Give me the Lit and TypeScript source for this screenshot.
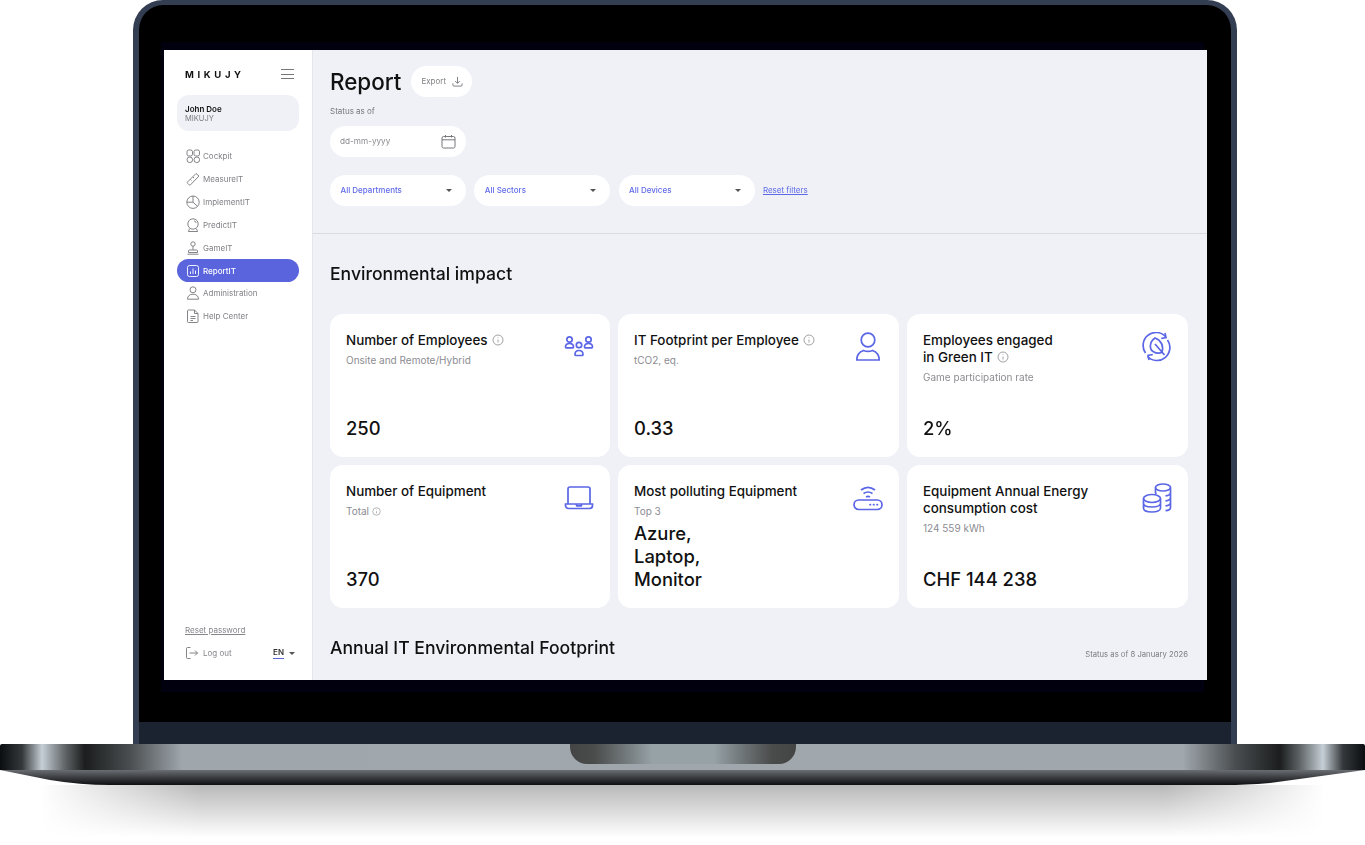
import { LitElement, html, svg, css } from 'lit';
import { customElement } from 'lit/decorators.js';

const navIcons: Record<string, unknown> = {
  cockpit: svg`<rect x="1" y="1" width="5.500" height="6" rx="1.800"/><rect x="8" y="1" width="5.500" height="6" rx="1.800"/><circle cx="3.800" cy="10.800" r="2.800"/><circle cx="10.800" cy="10.800" r="2.800"/>`,
  measure: svg`<path d="M1.500 10 10 1.500 13 4 4.500 12.800a1 1 0 0 1-1.400 0L1.500 11.200a.9.9 0 0 1 0-1.200Z"/><path d="m4.500 7.500 1 1M7 5l1 1"/>`,
  implement: svg`<circle cx="7" cy="7.200" r="6.200"/><path d="M7 1v6.200l4.600 4.200M7 7.200H.9"/>`,
  predict: svg`<circle cx="7" cy="6" r="5.200"/><path d="M8 2.800a3 3 0 0 1 2.200 2.200M3.600 10.600 2.400 13.500h9.200l-1.200-2.900"/>`,
  game: svg`<circle cx="7" cy="3" r="2.200"/><path d="M7 5.200V9M3.500 9h7a1 1 0 0 1 1 1v1.500h-9V10a1 1 0 0 1 1-1ZM1.500 13.200h11"/>`,
  report: svg`<rect x="1.500" y="1.500" width="11" height="11" rx="2"/><path d="M4.500 10V7.500M7 10V4.500M9.500 10V6.500"/>`,
  admin: svg`<circle cx="7" cy="3.800" r="3"/><path d="M1.500 13.200c0-3 2-5 5.500-5s5.500 2 5.500 5Z"/>`,
  help: svg`<path d="M2.500 1h6l3.500 3.500v8a1 1 0 0 1-1 1h-8.500a1 1 0 0 1-1-1V2a1 1 0 0 1 1-1Z"/><path d="M8.500 1v3.500H12M4.500 7.500h5M4.500 9.500h5M4.500 11.500h2.500"/>`,
};

// all drawn on a 30x30 box, top right of the card
const cardIcons: Record<string, unknown> = {
  people: svg`<circle cx="5.500" cy="7.500" r="2.700"/><path d="M1.500 15c0-2.500 1.500-3.500 4-3.500s4 1 4 3.500a.8.8 0 0 1-.8.800H2.300a.8.8 0 0 1-.8-.8Z"/><circle cx="15" cy="13" r="2.700"/><path d="M11 22.500c0-2.500 1.500-4 4-4s4 1.500 4 4a1 1 0 0 1-1 1h-6a1 1 0 0 1-1-1Z"/><circle cx="24.500" cy="7.500" r="2.700"/><path d="M20.500 15c0-2.500 1.500-3.500 4-3.500s4 1 4 3.500a.8.8 0 0 1-.8.800h-6.400a.8.8 0 0 1-.8-.8Z"/>`,
  person: svg`<circle cx="15" cy="8" r="6.800"/><path d="M3.800 28c0-5 2.500-8 6.700-9.500 2.500 1 6.500 1 9 0 4.200 1.500 6.700 4.500 6.700 9.500Z"/>`,
  leaf: svg`<path d="M3.500 21A13 13 0 0 1 23.500 4.500M25.500 8A13 13 0 0 1 5.500 24.500"/><path d="m23 1 1 4.500-4.800 1M7 28l-1-4.500 4.800-1"/><path d="M13 6C7 10 7 18 12 20c3 2 7 1 8 0 2-6-1-12-7-14ZM13 12l9.500 11"/>`,
  laptop: svg`<path d="M4 21V6a2 2 0 0 1 2-2h18a2 2 0 0 1 2 2v15"/><path d="M1.500 21h27v1.500a3 3 0 0 1-3 3h-21a3 3 0 0 1-3-3ZM12 21l.8 1.800h4.400L18 21"/>`,
  router: svg`<rect x="1" y="17" width="28" height="9.500" rx="4.700"/><path d="M8 7c4.500-3.500 9.500-3.500 14 0M10.500 10.500c3-2 6-2 9 0M13 14c1.500-.8 2.500-.8 4 0"/><path d="M17 21.700h.5M20.500 21.700h.5M24 21.700h.5" stroke-linecap="round"/>`,
  coins: svg`<ellipse cx="21" cy="4.500" rx="7.500" ry="3.500"/><path d="M13.500 4.500v5c0 .6.300 1.100.8 1.600M28.500 4.500v20c0 1.500-2 3-5 3.200M28.500 9.500c0 1.500-2 3-5 3.400M28.500 14.500c0 1.500-2 3-5 3.400M28.500 19.500c0 1.500-2 3-5 3.400"/><ellipse cx="10" cy="15.500" rx="8.500" ry="4"/><path d="M1.500 15.500V25c0 2.500 3.800 4 8.500 4s8.500-1.500 8.500-4v-9.500M1.500 20.200c0 2.300 3.800 3.800 8.500 3.800s8.500-1.500 8.500-3.800"/>`,
};

const nav = [
  ['Cockpit', 'cockpit'],
  ['MeasureIT', 'measure'],
  ['ImplementIT', 'implement'],
  ['PredictIT', 'predict'],
  ['GameIT', 'game'],
  ['ReportIT', 'report'],
  ['Administration', 'admin'],
  ['Help Center', 'help'],
];

const info = html`<svg class="info" viewBox="0 0 12 12"><circle cx="6" cy="6" r="5"/><path d="M6 5.500v3M6 3.400v.6"/></svg>`;

const cards = [
  { title: ['Number of Employees'], sub: 'Onsite and Remote/Hybrid', value: ['250'], icon: 'people', info: true },
  { title: ['IT Footprint per Employee'], sub: 'tCO2, eq.', value: ['0.33'], icon: 'person', info: true },
  { title: ['Employees engaged', 'in Green IT'], sub: 'Game participation rate', value: ['2%'], icon: 'leaf', info: true },
  { title: ['Number of Equipment'], sub: 'Total', value: ['370'], icon: 'laptop', subInfo: true },
  { title: ['Most polluting Equipment'], sub: 'Top 3', value: ['Azure,', 'Laptop,', 'Monitor'], icon: 'router' },
  { title: ['Equipment Annual Energy', 'consumption cost'], sub: '124 559 kWh', value: ['CHF 144 238'], icon: 'coins' },
];

@customElement('app-root')
export class AppRoot extends LitElement {
  static styles = css`
    :host {
      display: block;
      width: 1365px;
      height: 845px;
      overflow: hidden;
      background: #fff;
      font-family: Inter, 'Liberation Sans', sans-serif;
      color: #111;
    }
    .lid {
      width: 1104px;
      height: 744px;
      box-sizing: border-box;
      margin-left: 133px;
      border: 6px solid #343e52;
      border-top-width: 5px;
      border-bottom: none;
      border-radius: 30px 30px 0 0;
      background: #000;
      display: flex;
      flex-direction: column;
      overflow: hidden;
    }
    .bezel {
      flex: 1;
      padding: 45px 24px 42px 25px;
    }
    .chin {
      height: 22px;
      background: #1b2230;
    }
    .screen {
      height: 630px;
      display: flex;
      background: #eff1f6;
      overflow: hidden;
      box-shadow: -3px 12px 0 #00000f, -3px -8px 0 #00000f;
    }
    .sidebar {
      width: 149px;
      flex: none;
      box-sizing: border-box;
      padding: 17px 13px 20px;
      background: #fff;
      border-right: 1px solid #e4e6ec;
      display: flex;
      flex-direction: column;
      filter: blur(0.3px);
    }
    .brand {
      display: flex;
      align-items: center;
      justify-content: space-between;
      height: 14px;
      padding: 0 5px 0 8px;
    }
    .logo {
      font-size: 9.500px;
      font-weight: 700;
      letter-spacing: 3.650px;
    }
    .burger {
      width: 13px;
      height: 10px;
      border-top: 1px solid #777;
      border-bottom: 1px solid #777;
      position: relative;
      box-sizing: border-box;
    }
    .burger::after {
      content: '';
      position: absolute;
      left: 0;
      right: 0;
      top: 3.500px;
      height: 1px;
      background: #777;
    }
    .user {
      margin-top: 14px;
      height: 36px;
      box-sizing: border-box;
      padding: 9.500px 8px;
      border-radius: 12px;
      background: #eff1f6;
      font-size: 8px;
      line-height: 9.500px;
    }
    .user b {
      display: block;
      font-weight: 600;
    }
    .user span {
      color: #7c7c82;
      font-size: 7.500px;
    }
    .nav {
      margin-top: 14px;
      display: flex;
      flex-direction: column;
    }
    .item {
      height: 22.850px;
      display: flex;
      align-items: center;
      gap: 3px;
      padding-left: 9px;
      border-radius: 12px;
      font-size: 8px;
      color: #818186;
    }
    .item svg {
      width: 14px;
      height: 14px;
      fill: none;
      stroke: #77777c;
      stroke-width: 0.9;
    }
    .item.active {
      background: #5a64dd;
      color: #fff;
      font-weight: 500;
    }
    .item.active svg {
      stroke: #fff;
    }
    .bottom {
      margin-top: auto;
      padding-left: 8px;
      font-size: 8px;
      color: #85858a;
    }
    .reset-pw {
      line-height: 12px;
      text-decoration: underline;
      margin-bottom: 10px;
    }
    .logout {
      display: flex;
      align-items: center;
      height: 14px;
    }
    .logout svg {
      width: 14px;
      height: 14px;
      fill: none;
      stroke: #77777c;
      stroke-width: 0.9;
      margin-right: 4px;
    }
    .lang {
      margin-left: auto;
      margin-right: 4px;
      display: flex;
      align-items: center;
      gap: 5px;
      color: #333;
      font-weight: 600;
    }
    .lang span {
      border-bottom: 1px solid #5a64dd;
      padding-bottom: 1px;
    }
    .caret {
      width: 0;
      height: 0;
      border-left: 3px solid transparent;
      border-right: 3px solid transparent;
      border-top: 3.500px solid #555;
    }
    .main {
      flex: 1;
      min-width: 0;
      filter: blur(0.25px);
    }
    .head {
      height: 184px;
      box-sizing: border-box;
      padding: 16px 17px 0;
      border-bottom: 1px solid #d9dbe1;
    }
    .title-row {
      display: flex;
      align-items: center;
      gap: 10px;
      height: 31px;
    }
    h1 {
      margin: 0;
      font-size: 22.400px;
      font-weight: 500;
    }
    .pill {
      background: #fff;
      border-radius: 15.500px;
      height: 31px;
      box-sizing: border-box;
      padding-bottom: 1px;
      display: flex;
      align-items: center;
    }
    .export {
      width: 61px;
      padding-left: 10px;
      gap: 6px;
      font-size: 8px;
      color: #808085;
    }
    .export svg,
    .date svg {
      fill: none;
      stroke: #77777c;
      stroke-width: 1;
    }
    .export svg {
      width: 11px;
      height: 11px;
    }
    .status-label {
      margin: 9px 0 10px;
      font-size: 8px;
      line-height: 10px;
      color: #77777c;
    }
    .date {
      width: 136px;
      padding-left: 10px;
      padding-right: 10px;
      justify-content: space-between;
      font-size: 8.200px;
      color: #8a8a8f;
    }
    .date svg {
      width: 15px;
      height: 15px;
    }
    .filters {
      margin-top: 18px;
      display: flex;
      align-items: center;
      gap: 8.300px;
    }
    .select {
      width: 136px;
      padding-left: 10.500px;
      padding-right: 14px;
      justify-content: space-between;
      font-size: 8px;
      font-weight: 500;
      color: #5f6ae8;
    }
    .reset {
      font-size: 8px;
      color: #5f6ae8;
      text-decoration: underline;
      margin-bottom: 1px;
    }
    .content {
      padding: 29px 19px 0 17px;
    }
    h2 {
      margin: 0;
      font-size: 17.600px;
      line-height: 22px;
      font-weight: 500;
    }
    .grid {
      margin-top: 29px;
      display: grid;
      grid-template-columns: 280px 281px 281px;
      grid-auto-rows: 143px;
      gap: 8px;
    }
    .card {
      background: #fff;
      border-radius: 13px;
      padding: 18px 16px 17px;
      display: flex;
      flex-direction: column;
      position: relative;
    }
    .card-icon {
      position: absolute;
      top: 18px;
      right: 16px;
      width: 30px;
      height: 30px;
      fill: none;
      stroke: #5a66e6;
      stroke-width: 1.700;
    }
    .card-title {
      font-size: 13.400px;
      line-height: 17px;
      font-weight: 500;
    }
    .card-title div {
      white-space: nowrap;
    }
    .info {
      width: 12px;
      height: 12px;
      fill: none;
      stroke: #8a8a8f;
      stroke-width: 0.8;
      vertical-align: -1px;
      margin-left: 4px;
    }
    .card-sub {
      margin-top: 5px;
      font-size: 10px;
      line-height: 12px;
      color: #8c8c92;
    }
    .card-sub .info {
      width: 9px;
      height: 9px;
      vertical-align: -0.500px;
      margin-left: 3px;
    }
    .card-value {
      margin-top: auto;
      font-size: 18.400px;
      line-height: 23px;
      font-weight: 500;
    }
    .foot {
      margin-top: 29px;
      display: flex;
      justify-content: space-between;
      align-items: flex-start;
    }
    .foot span {
      margin-top: 13px;
      font-size: 7.700px;
      line-height: 10px;
      color: #7c7c82;
    }
    .base {
      position: relative;
      height: 41px;
    }
    .deck {
      height: 26px;
      border-radius: 2px 2px 0 0;
      background: linear-gradient(90deg, #0b0e10 0, #34383a 22px, #c6cfd6 42px, #5c6163 66px, #1b1d1e 85px, #4a4e50 130px, #9fa6ac 182px, #a0a7ad 1183px, #4a4e50 1235px, #1b1d1e 1280px, #5c6163 1299px, #c6cfd6 1323px, #34383a 1343px, #0b0e10 1365px);
    }
    .lip {
      height: 15px;
      background: linear-gradient(180deg, #6a6e72 0, #3a3c40 50%, #0e0f11 100%);
      clip-path: path('M0 0H1365L1270 13Q1245 15 1225 15H110Q80 15 50 10Z');
    }
    .notch {
      position: absolute;
      left: 570px;
      top: 0;
      width: 226px;
      height: 20px;
      border-radius: 0 0 17px 17px;
      background: linear-gradient(90deg, #444 0, #4a4b4b 24px, #7a8285 62px, #97a2a6 82px, #97a2a6 144px, #7a8285 164px, #4a4b4b 202px, #444 226px);
    }
    .shadow {
      height: 55px;
      margin: 0 40px;
      background: linear-gradient(180deg, #b8b8b8 0, #d6d6d6 40%, #fff 95%);
      -webkit-mask-image: linear-gradient(90deg, transparent 0, #000 160px, #000 calc(100% - 160px), transparent 100%);
      mask-image: linear-gradient(90deg, transparent 0, #000 160px, #000 calc(100% - 160px), transparent 100%);
    }
  `;

  render() {
    return html`
      <div class="lid">
        <div class="bezel">
          <div class="screen">
            <aside class="sidebar">
              <div class="brand">
                <span class="logo">MIKUJY</span>
                <div class="burger"></div>
              </div>
              <div class="user"><b>John Doe</b><span>MIKUJY</span></div>
              <nav class="nav">
                ${nav.map(([label, key]) => html`
                  <div class="item ${key === 'report' ? 'active' : ''}">
                    <svg viewBox="0 0 14 14">${navIcons[key]}</svg>${label}
                  </div>`)}
              </nav>
              <div class="bottom">
                <div class="reset-pw">Reset password</div>
                <div class="logout">
                  <svg viewBox="0 0 14 14"><path d="M5.500 1.500H2.500a1 1 0 0 0-1 1v9a1 1 0 0 0 1 1h3M4.500 7h8M10 4.500 12.500 7 10 9.500"/></svg>
                  Log out
                  <div class="lang"><span>EN</span><i class="caret"></i></div>
                </div>
              </div>
            </aside>
            <main class="main">
              <section class="head">
                <div class="title-row">
                  <h1>Report</h1>
                  <div class="pill export">Export
                    <svg viewBox="0 0 12 12"><path d="M6 1v7M3.500 5.500 6 8l2.500-2.500M1 8v2a1 1 0 0 0 1 1h8a1 1 0 0 0 1-1V8"/></svg>
                  </div>
                </div>
                <div class="status-label">Status as of</div>
                <div class="pill date">dd-mm-yyyy
                  <svg viewBox="0 0 15 15"><rect x="1" y="2.500" width="13" height="11.500" rx="1.500"/><path d="M1 5.800h13M4.500 1v2.500M10.500 1v2.500"/></svg>
                </div>
                <div class="filters">
                  ${['All Departments', 'All Sectors', 'All Devices'].map(
                    (f) => html`<div class="pill select">${f}<i class="caret"></i></div>`,
                  )}
                  <a class="reset">Reset filters</a>
                </div>
              </section>
              <section class="content">
                <h2>Environmental impact</h2>
                <div class="grid">
                  ${cards.map((c) => html`
                    <div class="card">
                      <svg class="card-icon" viewBox="0 0 30 30">${cardIcons[c.icon]}</svg>
                      <div class="card-title">
                        ${c.title.map((t, i) => html`<div>${t}${c.info && i === c.title.length - 1 ? info : ''}</div>`)}
                      </div>
                      <div class="card-sub">${c.sub}${c.subInfo ? info : ''}</div>
                      <div class="card-value">${c.value.map((v) => html`<div>${v}</div>`)}</div>
                    </div>`)}
                </div>
                <div class="foot">
                  <h2>Annual IT Environmental Footprint</h2>
                  <span>Status as of 8 January 2026</span>
                </div>
              </section>
            </main>
          </div>
        </div>
        <div class="chin"></div>
      </div>
      <div class="base">
        <div class="deck"></div>
        <div class="lip"></div>
        <div class="notch"></div>
      </div>
      <div class="shadow"></div>
    `;
  }
}
